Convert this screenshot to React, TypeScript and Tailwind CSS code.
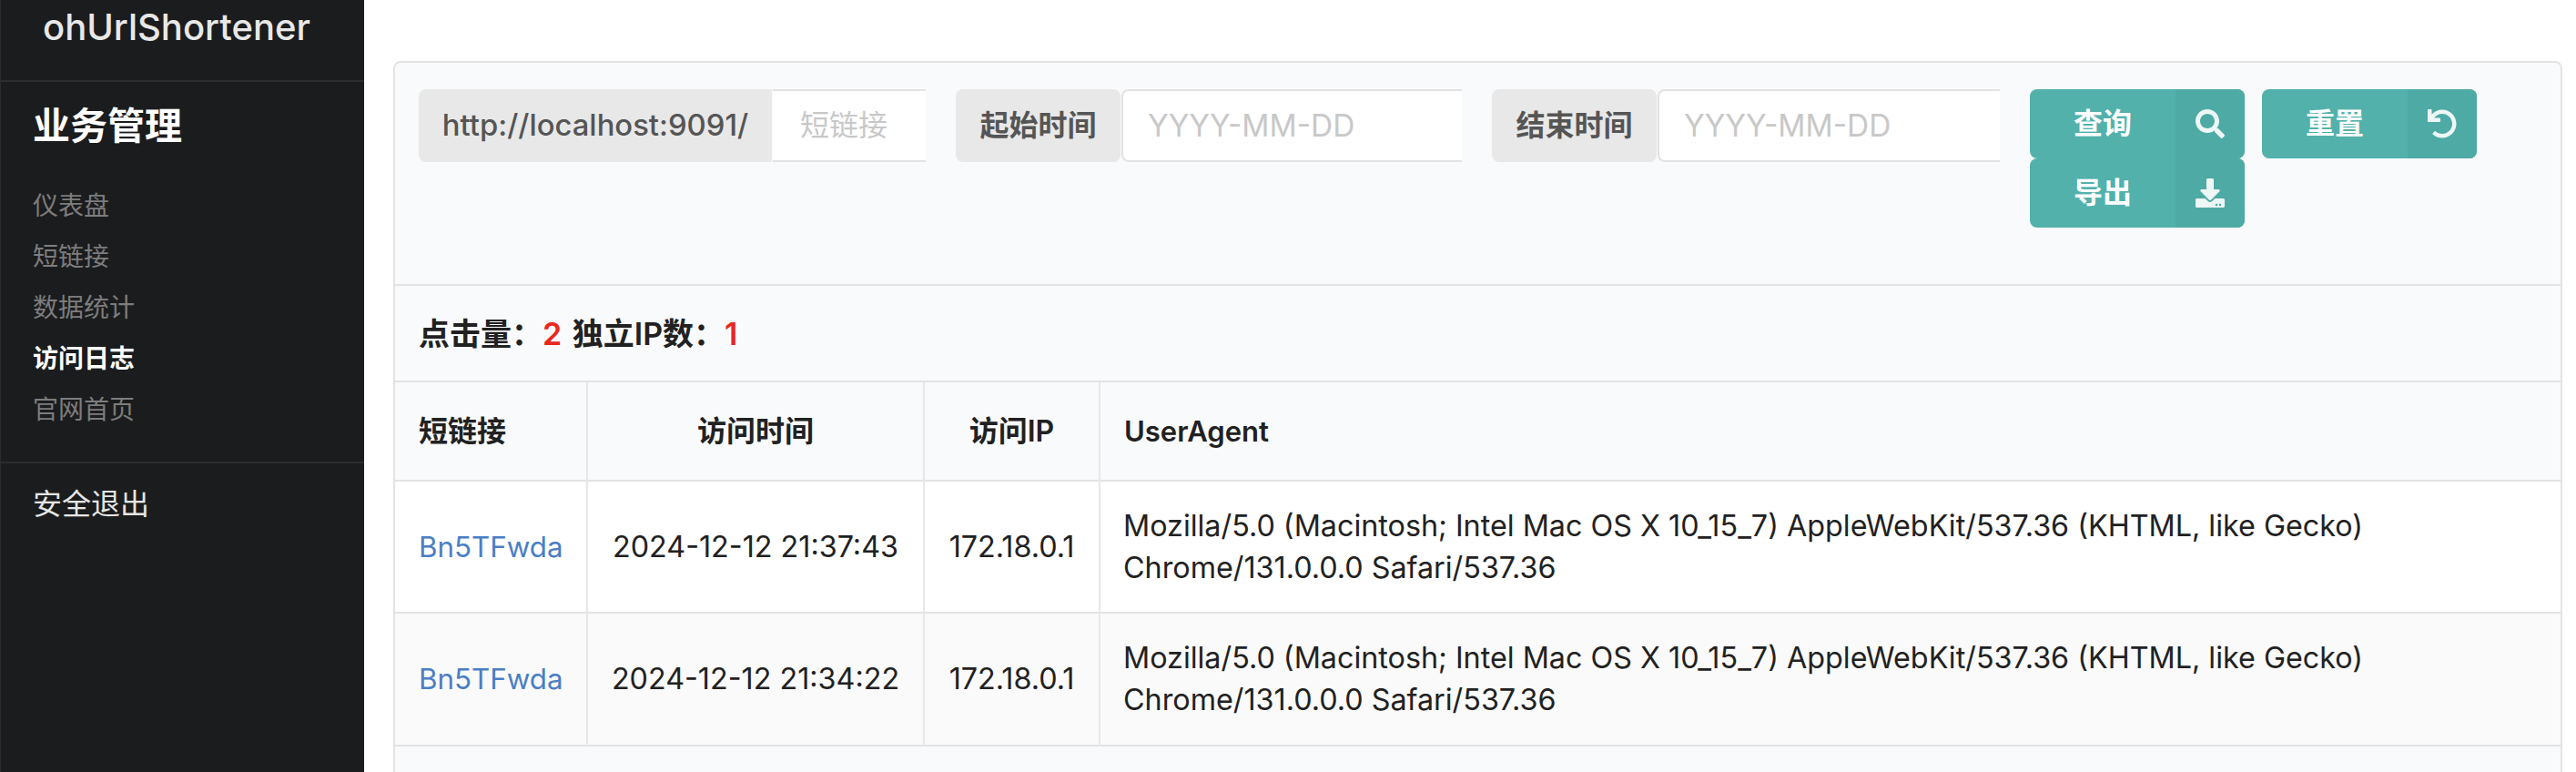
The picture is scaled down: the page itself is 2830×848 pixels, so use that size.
import React from 'react';
import { FaDownload, FaSearch, FaUndo } from 'react-icons/fa';

const font = "font-['Inter','Noto_Sans_CJK_SC',sans-serif]";

const navItems = [
  { label: '仪表盘' },
  { label: '短链接' },
  { label: '数据统计' },
  { label: '访问日志', active: true },
  { label: '官网首页' },
];

const UA_LINE_1 =
  'Mozilla/5.0 (Macintosh; Intel Mac OS X 10_15_7) AppleWebKit/537.36 (KHTML, like Gecko)';
const UA_LINE_2 = 'Chrome/131.0.0.0 Safari/537.36';

const rows = [
  { code: 'Bn5TFwda', time: '2024-12-12 21:37:43', ip: '172.18.0.1', striped: false },
  { code: 'Bn5TFwda', time: '2024-12-12 21:34:22', ip: '172.18.0.1', striped: true },
];

const Sidebar = () => (
  <aside className="w-[400px] shrink-0 bg-[#1b1c1d] border-l border-[#2a2b2c] flex flex-col">
    <div className="h-[90px] border-b-2 border-[#2c2d2e] pl-[46px] pt-[6px] text-[40px] leading-[48px] text-[#e8e8e8] font-medium">
      ohUrlShortener
    </div>
    <div className="h-[419px] border-b-2 border-[#2c2d2e] pl-[35px] pt-[24px]">
      <div className="text-[41px] leading-[48px] font-bold text-white">业务管理</div>
      <nav className="mt-[44px] flex flex-col gap-[16px]">
        {navItems.map((item) => (
          <div
            key={item.label}
            className={`text-[28px] leading-[40px] ${
              item.active ? 'font-bold text-white' : 'text-[#7d7d7e]'
            }`}
          >
            {item.label}
          </div>
        ))}
      </nav>
    </div>
    <div className="pl-[35px] pt-[22px] text-[32px] leading-[46px] text-[#e6e6e6]">安全退出</div>
  </aside>
);

const LabeledInput = ({
  label,
  placeholder,
  labelWidth,
  inputWidth,
  rounded,
  bold,
}: {
  label: string;
  placeholder: string;
  labelWidth: string;
  inputWidth: string;
  rounded?: boolean;
  bold?: boolean;
}) => (
  <div className="flex h-[80px]">
    <div
      className={`${labelWidth} rounded-l-[8px] ${rounded ? 'rounded-r-[8px]' : ''} bg-[#e8e8e8] flex items-center justify-center text-[#555555] ${
        bold ? 'text-[32px] font-bold' : 'text-[32.8px] font-medium'
      }`}
    >
      {label}
    </div>
    <div
      className={`${inputWidth} ml-px bg-white border-y-2 border-[#e2e2e2] flex items-center text-[#c8c8c8] ${
        rounded ? 'border-l-2 rounded-l-[8px] pl-[27px] text-[33.4px]' : 'pl-[30px] text-[32px]'
      }`}
    >
      {placeholder}
    </div>
  </div>
);

const IconButton = ({ label, icon }: { label: string; icon: React.ReactNode }) => (
  <div className="flex w-[236px] h-[76px] rounded-[8px] overflow-hidden bg-[#52b1ab] text-white">
    <div className="flex-1 flex items-center justify-center text-[32px] font-bold">{label}</div>
    <div className="w-[76px] bg-[#4eaaa4] flex items-center justify-center text-[#edf7f6]">{icon}</div>
  </div>
);

const cell = 'border-r-2 border-[#e6e7e8]';

export default function App() {
  return (
    <div className={`${font} flex h-[848px] w-[2830px] overflow-hidden bg-white text-[#212121]`}>
      <Sidebar />
      <main className="flex-1 pl-[32px] pr-[15px] pt-[67px]">
        <div className="h-[900px] rounded-t-[8px] border-2 border-[#e2e3e4] bg-[#f9fafc]">
          <div className="h-[245px] border-b-2 border-[#e2e3e4] pl-[26px] pt-[29px] flex items-start">
            <LabeledInput
              label="http://localhost:9091/"
              placeholder="短链接"
              labelWidth="w-[388px]"
              inputWidth="w-[168px]"
            />
            <div className="ml-[33px]">
              <LabeledInput
                label="起始时间"
                placeholder="YYYY-MM-DD"
                labelWidth="w-[181px]"
                inputWidth="w-[374px]"
                rounded
                bold
              />
            </div>
            <div className="ml-[33px]">
              <LabeledInput
                label="结束时间"
                placeholder="YYYY-MM-DD"
                labelWidth="w-[181px]"
                inputWidth="w-[376px]"
                rounded
                bold
              />
            </div>
            <div className="ml-[33px] w-[520px] flex flex-wrap gap-x-[19px]">
              <IconButton label="查询" icon={<FaSearch size={32} />} />
              <IconButton label="重置" icon={<FaUndo size={32} />} />
              <IconButton label="导出" icon={<FaDownload size={32} />} />
            </div>
          </div>

          <div className="h-[106px] border-b-2 border-[#e2e3e4] pl-[26px] flex items-center text-[34px] font-semibold">
            点击量：<span className="text-[#e8281f]">2</span>
            <span className="ml-[3px]">&nbsp;独立IP数：</span>
            <span className="text-[#e8281f]">1</span>
          </div>

          <table className="w-full table-fixed border-collapse text-[32.3px] leading-[46px]">
            <colgroup>
              <col className="w-[211px]" />
              <col className="w-[370px]" />
              <col className="w-[193px]" />
              <col />
            </colgroup>
            <thead>
              <tr className="h-[108px] border-b-2 border-[#e2e3e4] text-[32px] font-semibold">
                <th className={`${cell} pl-[26px] text-left font-semibold`}>短链接</th>
                <th className={`${cell} text-center font-semibold`}>访问时间</th>
                <th className={`${cell} text-center font-semibold`}>访问IP</th>
                <th className="pl-[26px] text-left text-[31px] font-semibold">UserAgent</th>
              </tr>
            </thead>
            <tbody>
              {rows.map((row) => (
                <tr
                  key={row.time}
                  className={`border-b-2 border-[#e2e3e4] ${row.striped ? 'h-[146px] bg-[#fafafa]' : 'h-[145px] bg-white'}`}
                >
                  <td className={`${cell} pl-[26px] text-[31.3px] text-[#4a7ec5]`}>{row.code}</td>
                  <td className={`${cell} text-center`}>{row.time}</td>
                  <td className={`${cell} text-center`}>{row.ip}</td>
                  <td className="pl-[25px]">
                    {UA_LINE_1}
                    <br />
                    {UA_LINE_2}
                  </td>
                </tr>
              ))}
            </tbody>
          </table>
        </div>
      </main>
    </div>
  );
}
